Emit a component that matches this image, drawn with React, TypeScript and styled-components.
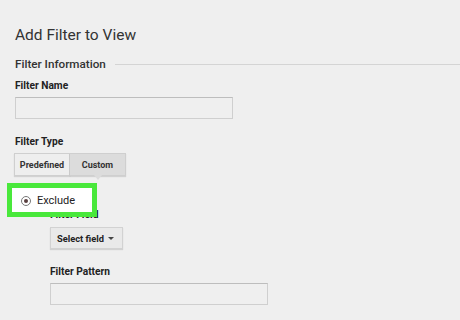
import React from 'react';
import styled, { createGlobalStyle } from 'styled-components';

const Global = createGlobalStyle`
  html, body {
    margin: 0;
    padding: 0;
    background: #efefef;
  }
  body {
    font-family: Roboto, "Liberation Sans", sans-serif;
    color: #222;
  }
`;

const Page = styled.div`
  position: relative;
  width: 460px;
  height: 320px;
  overflow: hidden;
  box-sizing: border-box;
  padding: 25px 0 0 15px;
  background: #efefef;
`;

const Title = styled.div`
  font-size: 15.5px;
  line-height: 20px;
  color: #333;
`;

const Section = styled.div`
  display: flex;
  align-items: center;
  gap: 9px;
  margin-top: 11px;
  font-size: 11.7px;
  line-height: 16px;
  font-weight: 500;
  color: #333;
  &::after {
    content: "";
    flex: 1;
    height: 1px;
    background: #d4d4d4;
    margin-top: 1px;
  }
`;

const Label = styled.div<{ $top: number }>`
  margin-top: ${(p) => p.$top}px;
  font-size: 10.2px;
  line-height: 14px;
  font-weight: 700;
  color: #222;
`;

const Input = styled.div`
  margin-top: 4px;
  width: 218px;
  height: 22px;
  box-sizing: border-box;
  border: 1px solid #cfcfcf;
  border-top-color: #bdbdbd;
  background: #efefef;
`;

const Group = styled.div`
  display: flex;
  margin-top: 4px;
  margin-left: -1px;
  height: 23px;
`;

const SegButton = styled.div<{ $active?: boolean }>`
  position: relative;
  display: flex;
  align-items: center;
  justify-content: center;
  width: 56px;
  box-sizing: border-box;
  font-size: 9px;
  font-weight: 700;
  color: #333;
  background: ${(p) => (p.$active ? '#dcdcdc' : '#eeeeee')};
  border: 1px solid #cfcfcf;
  box-shadow: 0 1px 1px rgba(0, 0, 0, 0.12);
  & + & {
    border-left: none;
  }
  ${(p) =>
    p.$active &&
    `&::after {
      content: "";
      position: absolute;
      left: 50%;
      bottom: -5px;
      margin-left: -4px;
      border-left: 4px solid transparent;
      border-right: 4px solid transparent;
      border-top: 5px solid #dcdcdc;
    }`}
`;

const Indented = styled.div`
  margin-left: 35px;
`;

const SelectButton = styled.div`
  display: flex;
  align-items: center;
  justify-content: space-between;
  margin-top: 5px;
  width: 73px;
  height: 22px;
  box-sizing: border-box;
  padding: 0 8px 0 6px;
  font-size: 9.3px;
  font-weight: 700;
  color: #222;
  background: #e9e9e9;
  border: 1px solid #d2d2d2;
  box-shadow: 0 1px 1px rgba(0, 0, 0, 0.12);
`;

const Caret = styled.span`
  width: 0;
  height: 0;
  border-left: 3px solid transparent;
  border-right: 3px solid transparent;
  border-top: 3px solid #444;
`;

const Highlight = styled.div`
  position: absolute;
  left: 7px;
  top: 183px;
  width: 90px;
  height: 34px;
  box-sizing: border-box;
  border: 5px solid #49e83b;
  background: #fff;
  display: flex;
  align-items: center;
  padding-left: 9px;
  gap: 6px;
  font-size: 11px;
  color: #222;
`;

const Radio = styled.span`
  width: 10px;
  height: 10px;
  box-sizing: border-box;
  border-radius: 50%;
  border: 1px solid #777;
  display: flex;
  align-items: center;
  justify-content: center;
  margin-top: 1px;
  &::after {
    content: "";
    width: 4px;
    height: 4px;
    border-radius: 50%;
    background: #5a4040;
  }
`;

export default function App() {
  return (
    <Page>
      <Global />
      <Title>Add Filter to View</Title>
      <Section>Filter Information</Section>
      <Label $top={7}>Filter Name</Label>
      <Input />
      <Label $top={16}>Filter Type</Label>
      <Group>
        <SegButton>Predefined</SegButton>
        <SegButton $active>Custom</SegButton>
      </Group>
      <Indented>
        <Label $top={32}>Filter Field</Label>
        <SelectButton>
          Select field
          <Caret />
        </SelectButton>
        <Label $top={16}>Filter Pattern</Label>
        <Input />
      </Indented>
      <Highlight>
        <Radio />
        Exclude
      </Highlight>
    </Page>
  );
}
